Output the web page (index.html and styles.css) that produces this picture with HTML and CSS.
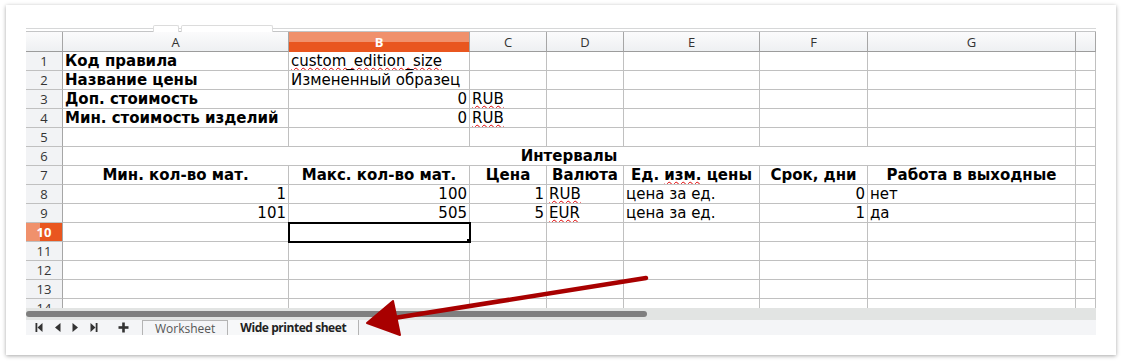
FILE: index.html
```html
<!DOCTYPE html>
<html lang="ru">

<head>
    <meta charset="UTF-8">
    <meta name="viewport" content="width=device-width, initial-scale=1.0">
    <title>Wide printed sheet</title>
    <link rel="stylesheet" href="styles.css">
</head>

<body>
    <div class="card">
        <div class="toolbar-edge">
            <div class="ghost-tab"></div>
            <div class="ghost-tab wide"></div>
        </div>
        <div class="grid-wrap">
            <table class="sheet">
                <colgroup>
                    <col class="c-hdr">
                    <col class="c-a">
                    <col class="c-b">
                    <col class="c-c">
                    <col class="c-d">
                    <col class="c-e">
                    <col class="c-f">
                    <col class="c-g">
                    <col class="c-h">
                </colgroup>
                <thead>
                    <tr>
                        <th class="corner"></th>
                        <th>A</th>
                        <th class="hl">B</th>
                        <th>C</th>
                        <th>D</th>
                        <th>E</th>
                        <th>F</th>
                        <th>G</th>
                        <th></th>
                    </tr>
                </thead>
                <tbody>
                    <tr>
                        <th>1</th>
                        <td class="b">Код правила</td>
                        <td><span class="spell">custom_edition_size</span></td>
                        <td></td><td></td><td></td><td></td><td></td><td></td>
                    </tr>
                    <tr>
                        <th>2</th>
                        <td class="b">Название цены</td>
                        <td>Измененный образец</td>
                        <td></td><td></td><td></td><td></td><td></td><td></td>
                    </tr>
                    <tr>
                        <th>3</th>
                        <td class="b">Доп. стоимость</td>
                        <td class="num">0</td>
                        <td><span class="spell">RUB</span></td>
                        <td></td><td></td><td></td><td></td><td></td>
                    </tr>
                    <tr>
                        <th>4</th>
                        <td class="b">Мин. стоимость изделий</td>
                        <td class="num">0</td>
                        <td><span class="spell">RUB</span></td>
                        <td></td><td></td><td></td><td></td><td></td>
                    </tr>
                    <tr>
                        <th>5</th>
                        <td></td><td></td><td></td><td></td><td></td><td></td><td></td><td></td>
                    </tr>
                    <tr>
                        <th>6</th>
                        <td class="b mid" colspan="7">Интервалы</td>
                        <td></td>
                    </tr>
                    <tr>
                        <th>7</th>
                        <td class="b mid">Мин. кол-во мат.</td>
                        <td class="b mid">Макс. кол-во мат.</td>
                        <td class="b mid">Цена</td>
                        <td class="b mid">Валюта</td>
                        <td class="b mid">Ед. <span class="spell">изм.</span> цены</td>
                        <td class="b mid">Срок, дни</td>
                        <td class="b mid">Работа в выходные</td>
                        <td></td>
                    </tr>
                    <tr>
                        <th>8</th>
                        <td class="num">1</td>
                        <td class="num">100</td>
                        <td class="num">1</td>
                        <td><span class="spell">RUB</span></td>
                        <td>цена за ед.</td>
                        <td class="num">0</td>
                        <td>нет</td>
                        <td></td>
                    </tr>
                    <tr>
                        <th>9</th>
                        <td class="num">101</td>
                        <td class="num">505</td>
                        <td class="num">5</td>
                        <td><span class="spell">EUR</span></td>
                        <td>цена за ед.</td>
                        <td class="num">1</td>
                        <td>да</td>
                        <td></td>
                    </tr>
                    <tr>
                        <th class="hl-row">10</th>
                        <td></td>
                        <td class="active"></td>
                        <td></td><td></td><td></td><td></td><td></td><td></td>
                    </tr>
                    <tr>
                        <th>11</th>
                        <td></td><td></td><td></td><td></td><td></td><td></td><td></td><td></td>
                    </tr>
                    <tr>
                        <th>12</th>
                        <td></td><td></td><td></td><td></td><td></td><td></td><td></td><td></td>
                    </tr>
                    <tr>
                        <th>13</th>
                        <td></td><td></td><td></td><td></td><td></td><td></td><td></td><td></td>
                    </tr>
                    <tr>
                        <th>14</th>
                        <td></td><td></td><td></td><td></td><td></td><td></td><td></td><td></td>
                    </tr>
                </tbody>
            </table>
        </div>
        <div class="hscroll">
            <div class="thumb"></div>
        </div>
        <div class="tabbar">
            <div class="nav">
                <svg width="8" height="11" viewBox="0 0 8 11"><rect x="0.5" y="1" width="1.8" height="9" /><path d="M7.5 1 L2.5 5.5 L7.5 10 Z" /></svg>
                <svg width="7" height="11" viewBox="0 0 7 11"><path d="M6.5 1 L1 5.5 L6.5 10 Z" /></svg>
                <svg width="7" height="11" viewBox="0 0 7 11"><path d="M0.5 1 L6 5.5 L0.5 10 Z" /></svg>
                <svg width="8" height="11" viewBox="0 0 8 11"><path d="M0.5 1 L5.5 5.5 L0.5 10 Z" /><rect x="5.7" y="1" width="1.8" height="9" /></svg>
                <svg class="plus" width="11" height="11" viewBox="0 0 11 11"><rect x="4.2" y="0.5" width="2.6" height="10" /><rect x="0.5" y="4.2" width="10" height="2.6" /></svg>
            </div>
            <div class="tab">Worksheet</div>
            <div class="tab current">Wide printed sheet</div>
        </div>
    </div>

    <svg class="arrow" width="1122" height="361" viewBox="0 0 1122 361">
        <line x1="646" y1="278" x2="388" y2="319" stroke="#a80000" stroke-width="4.5" stroke-linecap="round" />
        <path d="M367 323 L393 301 L400 335 Z" fill="#a80000" stroke="#a80000" stroke-width="2" stroke-linejoin="round" />
    </svg>
</body>

</html>
```

FILE: styles.css
```css
body {
    margin: 0;
    padding: 0;
    background-color: #ffffff;
    font-family: "DejaVu Sans", sans-serif;
    position: relative;
    width: 1122px;
    height: 361px;
    overflow: hidden;
}

.card {
    box-sizing: border-box;
    width: 1110px;
    height: 350px;
    margin: 5px 0 0 6px;
    padding: 23px 20px 20px 20px;
    background-color: #ffffff;
    box-shadow: 0 1px 4px rgba(0, 0, 0, 0.35);
}

.toolbar-edge {
    box-sizing: border-box;
    height: 4px;
    border-top: 1px solid #d6d7d8;
    border-bottom: 1px solid #c4c5c6;
    display: flex;
    align-items: flex-end;
    padding-left: 127px;
    gap: 2px;
}

.ghost-tab {
    box-sizing: border-box;
    width: 26px;
    height: 7px;
    margin-bottom: -1px;
    border: 1px solid #dcdcdc;
    border-bottom: none;
    border-radius: 2px 2px 0 0;
    background-color: #ffffff;
}

.ghost-tab.wide {
    width: 92px;
}

.grid-wrap {
    height: 276px;
    overflow: hidden;
}

.sheet {
    width: 1070px;
    table-layout: fixed;
    border-collapse: separate;
    border-spacing: 0;
    font-size: 15px;
    color: #000000;
}

.c-hdr { width: 37px; }
.c-a { width: 226px; }
.c-b { width: 181px; }
.c-c { width: 77px; }
.c-d { width: 77px; }
.c-e { width: 136px; }
.c-f { width: 108px; }
.c-g { width: 208px; }
.c-h { width: 20px; }

.sheet td {
    box-sizing: border-box;
    height: 19px;
    padding: 0 2px;
    line-height: 18px;
    border-right: 1px solid #c0c0c0;
    border-bottom: 1px solid #c0c0c0;
    white-space: nowrap;
    overflow: hidden;
}

.sheet thead th {
    box-sizing: border-box;
    height: 20px;
    padding: 0;
    font-family: "Open Sans", sans-serif;
    font-weight: normal;
    font-size: 13px;
    color: #333333;
    background: linear-gradient(#fbfbfc, #eef0f2);
    border-right: 1px solid #a6a6a6;
    border-bottom: 1px solid #9c9c9c;
}

.sheet thead th.hl {
    color: #ffffff;
    font-weight: bold;
    background: linear-gradient(#f0916c 0, #f0916c 52%, #e9561f 52%);
    border-bottom-color: #e9561f;
}

.sheet tbody th {
    box-sizing: border-box;
    height: 19px;
    padding: 0;
    font-family: "Open Sans", sans-serif;
    font-weight: normal;
    font-size: 13px;
    line-height: 18px;
    color: #333333;
    background-color: #f2f3f5;
    border-right: 1px solid #a6a6a6;
    border-bottom: 1px solid #c0c0c0;
}

.sheet tbody th.hl-row {
    color: #ffffff;
    font-weight: bold;
    background: linear-gradient(to right, #f0916c 0, #f0916c 38%, #e9561f 38%);
}

.b {
    font-weight: bold;
}

.mid {
    text-align: center;
}

.num {
    text-align: right;
}

.spell {
    text-decoration: underline wavy #e00000;
    text-decoration-thickness: 1px;
    text-underline-offset: 1px;
    text-decoration-skip-ink: none;
}

.sheet td.active {
    position: relative;
    outline: 2px solid #000000;
    outline-offset: -1px;
}

.sheet td.active::after {
    content: "";
    position: absolute;
    right: -3px;
    bottom: -3px;
    width: 5px;
    height: 5px;
    background-color: #000000;
}

.hscroll {
    height: 12px;
    background-color: #e2e4e3;
    display: flex;
    align-items: center;
}

.thumb {
    width: 621px;
    height: 6px;
    border-radius: 3px;
    background-color: #7f7f7f;
}

.tabbar {
    height: 15px;
    background-color: #f4f5f7;
    display: flex;
    align-items: stretch;
    font-family: "Open Sans", sans-serif;
    font-size: 12px;
}

.nav {
    width: 116px;
    display: flex;
    align-items: center;
    gap: 11px;
    padding-left: 9px;
    box-sizing: border-box;
}

.nav svg {
    fill: #333333;
}

.nav .plus {
    margin-left: 9px;
}

.tab {
    box-sizing: border-box;
    height: 15px;
    padding: 0 12px;
    line-height: 15px;
    color: #555555;
    border-top: 1px solid #b4b4b4;
    border-left: 1px solid #b4b4b4;
}

.tab.current {
    color: #222222;
    font-weight: bold;
    letter-spacing: -0.45px;
    background-color: #f7f8f9;
    border-top: none;
    border-right: 1px solid #b4b4b4;
}

.arrow {
    position: absolute;
    top: 0;
    left: 0;
    pointer-events: none;
}
```
